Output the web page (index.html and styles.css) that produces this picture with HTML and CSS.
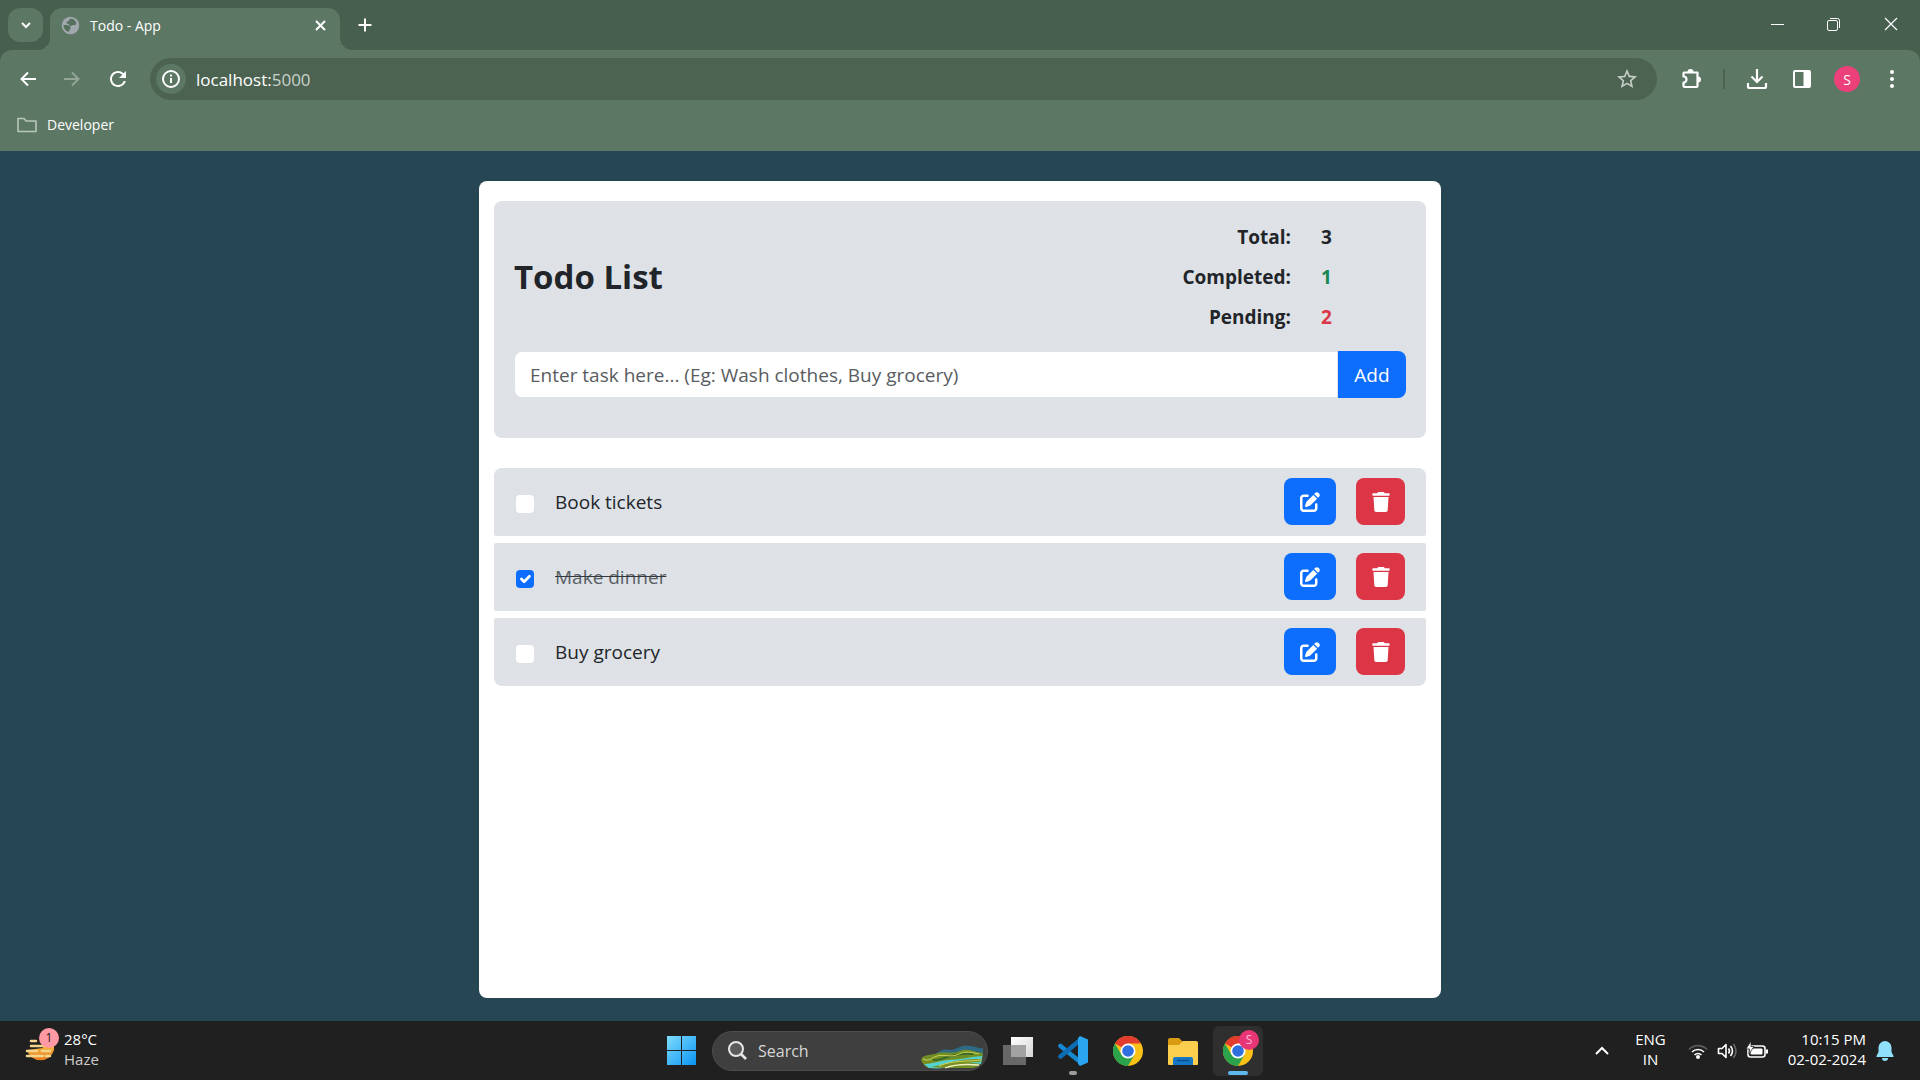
FILE: index.html
```html
<!DOCTYPE html>
<html lang="en">
<head>
<meta charset="utf-8">
<title>Todo - App</title>
<link rel="stylesheet" href="styles.css">
</head>
<body>
<header class="browser">
  <div class="tabstrip">
    <button class="tab-search" aria-label="Search tabs"><svg width="20" height="20" viewBox="0 0 20 20"><path d="M6 8l4 4 4-4" fill="none" stroke="currentColor" stroke-width="2"/></svg></button>
    <div class="tab">
      <svg width="21" height="21" viewBox="0 0 24 24"><circle cx="12" cy="12" r="10" fill="#a0a8ad"/><path fill="#566f5f" d="M11 4.500c3-1 6 1 7.500 4 .5 2-1 3.500-3 3-2-.4-2 1.500-3.500 1-2-.8-1.500-2.500-3.500-2.500-1.500-.2-1.500-2 0-2.500 2-.3 2-2 2.500-3zM4 11.500h4c2.500.5 4.500 1.500 4 4-.4 1.500-2 1.500-2 4C6.500 18.500 4 15.500 4 11.500z"/></svg>
      <span class="tab-title">Todo - App</span>
      <button class="icon-btn tab-close" aria-label="Close tab"><svg width="16" height="16" viewBox="0 0 16 16"><path d="M4 4l9 9M13 4l-9 9" stroke="currentColor" stroke-width="2"/></svg></button>
    </div>
    <button class="icon-btn new-tab" aria-label="New tab"><svg width="18" height="18" viewBox="0 0 18 18"><path d="M9 2.500v13M2.500 9h13" stroke="currentColor" stroke-width="2"/></svg></button>
    <div class="window-controls">
      <button class="icon-btn" aria-label="Minimize"><svg width="16" height="16" viewBox="0 0 16 16"><path d="M2 8.500h13" stroke="currentColor"/></svg></button>
      <button class="icon-btn" aria-label="Restore"><svg width="16" height="16" viewBox="0 0 16 16" fill="none" stroke="currentColor"><rect x="1.500" y="4.500" width="10" height="10" rx="1.500"/><path d="M4 2.500h7.500a2 2 0 0 1 2 2V12"/></svg></button>
      <button class="icon-btn" aria-label="Close"><svg width="16" height="16" viewBox="0 0 16 16"><path d="M2 2l12 12M14 2L2 14" stroke="currentColor" stroke-width="1.200"/></svg></button>
    </div>
  </div>
  <div class="chrome-body">
    <div class="toolbar">
      <nav class="nav-buttons" aria-label="History">
        <button class="icon-btn" aria-label="Back"><svg width="20" height="20" viewBox="0 0 20 20" fill="none" stroke="currentColor" stroke-width="2"><path d="M18 10H4M10 3.500L3.500 10l6.500 6.500"/></svg></button>
        <button class="icon-btn dim" aria-label="Forward"><svg width="20" height="20" viewBox="0 0 20 20" fill="none" stroke="currentColor" stroke-width="2"><path d="M2 10h14M10 3.500l6.500 6.500-6.500 6.500"/></svg></button>
        <button class="icon-btn" aria-label="Reload"><svg width="24" height="24" viewBox="0 0 24 24"><path fill="currentColor" d="M17.650 6.350A7.960 7.960 0 0 0 12 4c-4.420 0-7.990 3.580-7.990 8s3.570 8 7.990 8c3.730 0 6.840-2.550 7.730-6h-2.080A5.990 5.990 0 0 1 12 18c-3.310 0-6-2.690-6-6s2.690-6 6-6c1.660 0 3.140.690 4.220 1.780L13 11h7V4l-2.350 2.350z"/></svg></button>
      </nav>
      <div class="omnibox">
        <button class="icon-btn site-info" aria-label="Site information"><svg width="20" height="20" viewBox="0 0 20 20" fill="none" stroke="currentColor" stroke-width="2"><circle cx="10" cy="10" r="8"/><path d="M10 9v5M10 5.500v2"/></svg></button>
        <span class="url">localhost:<span class="port">5000</span></span>
        <button class="icon-btn star" aria-label="Bookmark this tab"><svg width="24" height="24" viewBox="0 0 24 24"><path fill="currentColor" d="M22 9.240l-7.190-.620L12 2 9.190 8.630 2 9.240l5.460 4.730L5.820 21 12 17.270 18.180 21l-1.630-7.030L22 9.240zM12 15.400l-3.760 2.270 1-4.280-3.320-2.880 4.380-.380L12 6.100l1.710 4.040 4.380.380-3.320 2.880 1 4.280L12 15.400z"/></svg></button>
      </div>
      <div class="tools">
        <button class="icon-btn" aria-label="Extensions"><svg width="24" height="24" viewBox="0 0 24 24"><path d="M4.500 5.500H8h10.500v13.500a1 1 0 0 1-1 1h-12a1 1 0 0 1-1-1v-3.500a3 3 0 0 0 0-6V6.500a1 1 0 0 1 1-1h12a1 1 0 0 1 1 1" fill="none" stroke="currentColor" stroke-width="2.200" stroke-linejoin="round"/><path d="M8.500 5a3 3 0 0 1 6 0zM19 9.500a3 3 0 0 1 0 6z" fill="currentColor"/></svg></button>
        <span class="separator"></span>
        <button class="icon-btn" aria-label="Downloads"><svg width="24" height="24" viewBox="0 0 24 24" fill="none" stroke="currentColor" stroke-width="2.200"><path d="M12 2v12.500M6.500 9.500l5.500 5.500 5.500-5.500M3 16v3.500a1.500 1.500 0 0 0 1.500 1.500h15a1.500 1.500 0 0 0 1.500-1.500V16"/></svg></button>
        <button class="icon-btn" aria-label="Side panel"><svg width="24" height="24" viewBox="0 0 24 24"><rect x="4" y="4" width="16" height="16" rx="1" fill="none" stroke="currentColor" stroke-width="2"/><path d="M13.500 4H20v16h-6.500z" fill="currentColor"/></svg></button>
        <button class="avatar" aria-label="Profile">S</button>
        <button class="icon-btn" aria-label="Menu"><svg width="24" height="24" viewBox="0 0 24 24" fill="currentColor"><circle cx="12" cy="5" r="2"/><circle cx="12" cy="12" r="2"/><circle cx="12" cy="19" r="2"/></svg></button>
      </div>
    </div>
    <nav class="bookmarks" aria-label="Bookmarks">
      <a class="bookmark" href="#"><svg width="22" height="18" viewBox="0 0 22 18"><path d="M2 15.500v-13h6l2 2.500h10v10.500H2z" fill="none" stroke="#b9c6bc" stroke-width="1.600" stroke-linejoin="round"/></svg>Developer</a>
    </nav>
  </div>
</header>

<main class="page">
  <div class="card">
    <section class="panel">
      <div class="summary">
        <h1>Todo List</h1>
        <dl class="stats">
          <dt>Total:</dt><dd>3</dd>
          <dt>Completed:</dt><dd class="done-count">1</dd>
          <dt>Pending:</dt><dd class="pending-count">2</dd>
        </dl>
      </div>
      <form class="add-form">
        <input type="text" class="task-input" aria-label="New task" placeholder="Enter task here... (Eg: Wash clothes, Buy grocery)">
        <button type="button" class="btn btn-add">Add</button>
      </form>
    </section>
    <ul class="tasks">
      <li class="task">
        <input type="checkbox" id="task-1"><label for="task-1">Book tickets</label>
        <button class="btn btn-edit" aria-label="Edit"><svg class="fa"><use href="#pen"/></svg></button>
        <button class="btn btn-delete" aria-label="Delete"><svg class="fa"><use href="#trash"/></svg></button>
      </li>
      <li class="task completed">
        <input type="checkbox" id="task-2" checked><label for="task-2">Make dinner</label>
        <button class="btn btn-edit" aria-label="Edit"><svg class="fa"><use href="#pen"/></svg></button>
        <button class="btn btn-delete" aria-label="Delete"><svg class="fa"><use href="#trash"/></svg></button>
      </li>
      <li class="task">
        <input type="checkbox" id="task-3"><label for="task-3">Buy grocery</label>
        <button class="btn btn-edit" aria-label="Edit"><svg class="fa"><use href="#pen"/></svg></button>
        <button class="btn btn-delete" aria-label="Delete"><svg class="fa"><use href="#trash"/></svg></button>
      </li>
    </ul>
  </div>
</main>

<footer class="taskbar">
  <div class="weather">
    <span class="weather-icon">
      <svg width="30" height="30" viewBox="0 0 30 30"><defs><linearGradient id="sun" x1="0" y1="0" x2="0" y2="1"><stop offset="0" stop-color="#f6c84a"/><stop offset="1" stop-color="#e8791c"/></linearGradient></defs><path d="M2 14a14 14 0 0 0 27 0V6H18v6z" fill="url(#sun)"/><g stroke="#f3d58b" stroke-width="2.600" stroke-linecap="round"><path d="M6 5h5M6 10h12M2 15h10M17 15h8M2 20h16M21 20h4"/></g></svg>
      <span class="weather-badge">1</span>
    </span>
    <div class="weather-text"><div>28°C</div><div class="muted">Haze</div></div>
  </div>
  <div class="apps">
    <button class="app" aria-label="Start"><svg width="30" height="30" viewBox="0 0 30 30"><defs><linearGradient id="win" x1="0" y1="0" x2="1" y2="1"><stop offset="0" stop-color="#7fdcfb"/><stop offset="1" stop-color="#0a94f5"/></linearGradient></defs><path fill="url(#win)" d="M0 0h14v14H0zM15 0h14v14H15zM0 15h14v14H0zM15 15h14v14H15z"/></svg></button>
    <label class="search">
      <svg width="22" height="22" viewBox="0 0 22 22"><circle cx="10" cy="9" r="7" fill="#5b5b5b" stroke="#e6e6e6" stroke-width="2"/><path d="M15 14l5 5" stroke="#e6e6e6" stroke-width="2.600"/></svg>
      <input type="text" placeholder="Search" aria-label="Search">
      <svg class="search-art" width="62" height="24" viewBox="0 0 62 24"><path d="M14 10c6-6 10-6 16-5 8-2 12-6 19-4 5 0 8 3 13 2v9H14z" fill="#2f6a85"/><path d="M0 15c1-5 8-5 14-6 6-3 14 0 22-2 8-4 14-2 20 0l6 1-1 8c-2 5-6 7-10 7H8c-4-1-6-4-8-8z" fill="#6f8f25"/><path d="M3 19c8 0 14-3 24-4 12 0 20-3 34-4l-1 8c-8-2-18-1-26 1-8 3-16 4-26 3z" fill="#55d3d0"/><path d="M10 22c14-2 22-8 50-8l-1 3c-14-1-22 6-36 6zM1 17c10-1 14-6 24-6-8 2-14 8-22 8z" fill="#7a8f22"/><path d="M12 15c10 1 18-8 40-6" stroke="#3c6a24" stroke-width="2" fill="none"/><path d="M2 14c6 3 8-1 14-3 8-2 14 2 22-2 6-3 12-2 20 0M18 21c14-6 26-4 42-6" stroke="#d1d058" stroke-width="1" fill="none"/><path d="M24 23c10-4 22-4 34-3" stroke="#f0efc0" stroke-width="1.300" fill="none"/></svg>
    </label>
    <button class="app" aria-label="Task view"><svg width="30" height="30" viewBox="0 0 30 30"><defs><linearGradient id="tv" x1="0" y1="0" x2="1" y2="1"><stop offset="0" stop-color="#fff"/><stop offset="1" stop-color="#d6d6d6"/></linearGradient></defs><path d="M0 9h23v20H0z" fill="#686868"/><path d="M8 1h22v20H8z" fill="url(#tv)"/><path d="M8 9h15v12H8z" fill="#a2a2a2"/></svg></button>
    <button class="app" aria-label="Visual Studio Code"><svg width="30" height="30" viewBox="0 0 30 30"><path d="M2.500 10L21 25" stroke="#1688d0" stroke-width="4.500" stroke-linecap="round"/><path d="M2.500 20.500L21 5" stroke="#0c6db5" stroke-width="4.500" stroke-linecap="round"/><path d="M22 0l8 3.500v23L22 30l-2-2V2z" fill="#2aa5f0"/></svg><span class="running"></span></button>
    <button class="app" aria-label="Google Chrome"><svg width="30" height="30"><use href="#chrome"/></svg></button>
    <button class="app" aria-label="File Explorer"><svg width="30" height="30" viewBox="0 0 30 30"><path d="M0 4q0-2 2-2h9l4 4v6H0z" fill="#d99b12"/><path d="M0 9h11l4-4h13q2 0 2 2v21q0 1-1 1H1q-1 0-1-1z" fill="#fbcf4d"/><path d="M5 29v-6q0-2 2-2h16q2 0 2 2v6z" fill="#1677c4"/><path d="M9 24.500h12" stroke="#0a4f8f" stroke-width="1.500"/></svg></button>
    <button class="app active" aria-label="Google Chrome, Todo - App"><svg width="30" height="30"><use href="#chrome"/></svg><span class="profile-badge">S</span><span class="running current"></span></button>
  </div>
  <div class="tray">
    <button class="icon-btn" aria-label="Show hidden icons"><svg width="16" height="16" viewBox="0 0 16 16"><path d="M2 11l6-6 6 6" fill="none" stroke="currentColor" stroke-width="2"/></svg></button>
    <div class="lang"><div>ENG</div><div>IN</div></div>
    <div class="status">
      <svg width="20" height="20" viewBox="0 0 20 20" fill="none"><path d="M1 8.500a12.500 12.500 0 0 1 18 0" stroke="#5a5a5a" stroke-width="1.600"/><path d="M4 11a8.500 8.500 0 0 1 12 0M6.500 14a5 5 0 0 1 7 0" stroke="#fff" stroke-width="1.600"/><circle cx="10" cy="16" r="2" fill="#fff"/></svg>
      <svg width="20" height="20" viewBox="0 0 20 20" fill="none" stroke="#fff" stroke-width="1.600"><path d="M1.500 7.500H5L9 3.500v13l-4-4H1.500z" stroke-linejoin="round"/><path d="M11.500 7.500q2 2.500 0 5M13.500 5q4 5 0 10"/><path d="M16.500 3q5 7 0 14" stroke="#666"/></svg>
      <svg width="22" height="20" viewBox="0 0 22 20"><rect x="2" y="5" width="17" height="11" rx="2.500" fill="none" stroke="#fff" stroke-width="1.600"/><rect x="4.500" y="7.500" width="12" height="6" rx="1" fill="#fff"/><path d="M20 8.500h2v4h-2z" fill="#fff"/><path d="M5 0L0 8h3.500L3 13l5-7.500H5z" fill="#fff" stroke="#222" stroke-width=".8"/></svg>
    </div>
    <div class="clock"><div>10:15 PM</div><div>02-02-2024</div></div>
    <button class="icon-btn" aria-label="Notifications"><svg width="18" height="20" viewBox="0 0 18 20" fill="#8fe0fb"><path d="M9 0a6.500 6.500 0 0 0-6.500 6.500v4.500L.500 15v1h17v-1l-2-4V6.500A6.500 6.500 0 0 0 9 0zM6 17h6a3 3 0 0 1-6 0z"/></svg></button>
  </div>
</footer>

<svg class="sprites" width="0" height="0" aria-hidden="true">
  <symbol id="pen" viewBox="0 0 512 512"><path d="M471.600 21.700c-21.900-21.900-57.300-21.900-79.200 0L362.300 51.700l97.900 97.900 30.100-30.100c21.900-21.900 21.900-57.300 0-79.200L471.600 21.700zm-299.200 220c-6.100 6.100-10.800 13.600-13.500 21.900l-29.600 88.800c-2.900 8.600-.600 18.100 5.800 24.600s15.900 8.700 24.600 5.800l88.800-29.600c8.200-2.700 15.700-7.400 21.900-13.500L437.700 172.300 339.700 74.300 172.400 241.700zM96 64C43 64 0 107 0 160V416c0 53 43 96 96 96H352c53 0 96-43 96-96V320c0-17.700-14.300-32-32-32s-32 14.300-32 32v96c0 17.700-14.300 32-32 32H96c-17.700 0-32-14.300-32-32V160c0-17.700 14.300-32 32-32h96c17.700 0 32-14.300 32-32s-14.300-32-32-32H96z"/></symbol>
  <symbol id="trash" viewBox="0 0 448 512"><path d="M135.200 17.700L128 32H32C14.300 32 0 46.300 0 64S14.300 96 32 96H416c17.700 0 32-14.300 32-32s-14.300-32-32-32H320l-7.200-14.300C307.400 6.800 296.300 0 284.200 0H163.800c-12.100 0-23.200 6.800-28.600 17.700zM416 128H32L53.200 467c1.600 25.300 22.600 45 47.900 45H346.900c25.300 0 46.300-19.700 47.900-45L416 128z"/></symbol>
  <symbol id="chrome" viewBox="0 0 30 30"><circle cx="15" cy="15" r="15" fill="#fbc116"/><path d="M15 15L2 7.500A15 15 0 0 1 28 7.500H15z" fill="#e33b2e"/><path d="M2 7.500A15 15 0 0 0 15 30l6.500-11.200L15 15l-6.500 3.800z" fill="#2ba24c"/><circle cx="15" cy="15" r="7.500" fill="#fff"/><circle cx="15" cy="15" r="5.800" fill="#2f6fe0"/></symbol>
</svg>
</body>
</html>
```
FILE: styles.css
```css
* { box-sizing: border-box; }
body {
  margin: 0;
  min-height: 100vh;
  display: flex;
  flex-direction: column;
  background: #264653;
  color: #212529;
  font-family: "Open Sans", "Noto Sans", sans-serif;
  font-size: 19px;
}
button, input { font: inherit; color: inherit; }
button { border: 0; padding: 0; background: none; }
svg { display: block; flex: none; }
.sprites { position: absolute; }
.icon-btn { display: flex; align-items: center; justify-content: center; }

/* Browser window */
.browser { background: #475f4e; color: #fff; font-size: 14px; }
.tabstrip { display: flex; height: 50px; padding: 8px 1px 0 8px; }
.tab-search {
  width: 35px; height: 34px; border-radius: 12px; background: #5c7764;
  display: flex; align-items: center; justify-content: center;
}
.tab {
  position: relative;
  display: flex; align-items: center; gap: 9px;
  width: 290px; margin-left: 7px; padding: 0 12px 8px 10px;
  background: #5c7764; border-radius: 12px 12px 0 0;
}
.tab::before, .tab::after {
  content: ""; position: absolute; bottom: 0; width: 12px; height: 12px;
}
.tab::before { left: -12px; background: radial-gradient(circle at 0 0, #475f4e 12px, #5c7764 12px); }
.tab::after { right: -12px; background: radial-gradient(circle at 100% 0, #475f4e 12px, #5c7764 12px); }
.tab-title { flex: 1; }
.new-tab { width: 34px; height: 34px; margin-left: 8px; }
.window-controls { display: flex; gap: 1px; margin-left: auto; height: 32px; }
.window-controls .icon-btn { width: 56px; }
.chrome-body { background: #5c7764; border-radius: 12px 12px 0 0; }
.toolbar { display: flex; align-items: center; height: 58px; padding: 0 16px 0 18px; }
.nav-buttons { display: flex; align-items: center; justify-content: space-between; width: 112px; }
.dim { color: #93a598; }
.omnibox {
  flex: 1; display: flex; align-items: center; height: 42px;
  margin-left: 20px; padding: 0 18px 0 6px;
  border-radius: 21px; background: #4d6352;
}
.site-info { width: 30px; height: 30px; border-radius: 50%; background: #5c7764; }
.url { flex: 1; margin-left: 10px; font-size: 17px; }
.port { color: #c8d2ca; }
.star { color: #c5cfc7; }
.tools { display: flex; align-items: center; margin-left: 22px; }
.separator { width: 2px; height: 20px; margin: 0 20px; background: #4a6352; }
.tools .icon-btn + .icon-btn { margin-left: 21px; }
.avatar { width: 26px; height: 26px; margin: 0 20px; border-radius: 50%; background: #ec407a; }
.bookmarks { height: 43px; padding: 6px 16px; }
.bookmark { display: inline-flex; align-items: center; gap: 9px; color: #fff; text-decoration: none; line-height: 22px; }

/* Todo page */
.page { flex: 1; display: flex; justify-content: center; padding: 30px 0 23px; }
.card { width: calc(50% + 2px); padding: 20px 15px; border-radius: 8px; background: #fff; }
.panel { padding: 16px 20px 40px; border-radius: 8px; background: #dee2e6; }
.summary { display: flex; align-items: center; justify-content: space-between; }
h1 { margin: 0; font-size: 33px; font-weight: 700; line-height: 40px; }
.stats { display: grid; grid-template-columns: auto 85px; column-gap: 30px; margin: 0; line-height: 40px; font-weight: 700; }
.stats dt { text-align: right; }
.stats dd { margin: 0; }
.done-count { color: #198754; }
.pending-count { color: #dc3545; }
.add-form { display: flex; margin-top: 14px; }
.task-input {
  flex: 1; min-width: 0; height: 47px; padding: 0 15px;
  border: 1px solid #dee2e6; border-radius: 8px 0 0 8px; background: #fff;
}
.task-input::placeholder { color: #595c5f; opacity: 1; }
.btn { display: flex; align-items: center; justify-content: center; height: 47px; border-radius: 8px; color: #fff; }
.btn-add { width: 68px; border-radius: 0 8px 8px 0; background: #0d6efd; }
.tasks { display: grid; gap: 7px; margin: 30px 0 0; padding: 0; list-style: none; }
.task { display: flex; align-items: center; padding: 10px 21px 11px 22px; border-radius: 2px; background: #dee2e6; }
.task:first-child { border-radius: 8px 8px 2px 2px; }
.task:last-child { border-radius: 2px 2px 8px 8px; }
.task label { flex: 1; margin-left: 21px; }
.completed label { color: #596066; text-decoration: line-through #33393d; }
.task input {
  appearance: none; width: 18px; height: 18px; margin: 4px 0 0;
  border-radius: 4px; background: #fff;
}
.task input:checked {
  background: #0d6efd url("data:image/svg+xml,%3Csvg xmlns='http://www.w3.org/2000/svg' viewBox='0 0 20 20'%3E%3Cpath fill='none' stroke='%23fff' stroke-linecap='round' stroke-linejoin='round' stroke-width='3' d='m6 10 3 3 6-6'/%3E%3C/svg%3E") center / contain;
}
.btn-edit { width: 52px; background: #0d6efd; }
.btn-delete { width: 49px; margin-left: 20px; background: #dc3545; }
.fa { width: 20px; height: 20px; fill: #fff; }

/* Taskbar */
.taskbar {
  display: grid; grid-template-columns: 1fr auto 1fr; align-items: center;
  height: 59px; background: #202020; color: #fff; font-size: 15px; line-height: 20px;
}
.weather { display: flex; align-items: center; gap: 9px; padding-left: 25px; }
.weather-icon { position: relative; }
.weather-badge {
  position: absolute; top: -8px; right: -4px; width: 20px; height: 20px;
  border-radius: 50%; background: #ff99a4; color: #222; font-size: 12px; text-align: center;
}
.weather-text, .lang, .clock { padding-bottom: 4px; }
.muted { color: #ccc; }
.apps { display: flex; align-items: center; gap: 5px; }
.app {
  position: relative; display: flex; align-items: center; justify-content: center;
  width: 50px; height: 50px; border-radius: 6px;
}
.active { background: #2f2f2f; }
.running { position: absolute; bottom: 1px; left: 50%; width: 8px; height: 4px; margin-left: -4px; border-radius: 2px; background: #9c9c9c; }
.current { width: 20px; margin-left: -10px; background: #5fb8ec; }
.profile-badge {
  position: absolute; top: 4px; right: 4px; width: 20px; height: 20px;
  border-radius: 50%; background: #e83576; color: #fbd; font-size: 12px; line-height: 20px;
}
.search {
  display: flex; align-items: center; width: 276px; height: 40px; padding: 0 4px 0 13px;
  border: 1px solid #4d4d4d; border-radius: 20px; background: #3f3f3f;
}
.search input { flex: 1; min-width: 0; margin-left: 8px; border: 0; padding: 0 0 0 2px; background: none; font-size: 16px; }
.search input::placeholder { color: #d6d6d6; opacity: 1; }
.search-art { align-self: flex-end; margin-bottom: 1px; }
.tray { display: flex; align-items: center; justify-content: flex-end; padding-right: 26px; }
.lang { margin-left: 25px; text-align: center; }
.status { display: flex; align-items: center; gap: 9px; margin: 0 20px 0 22px; }
.clock { margin-right: 10px; text-align: right; }
```
